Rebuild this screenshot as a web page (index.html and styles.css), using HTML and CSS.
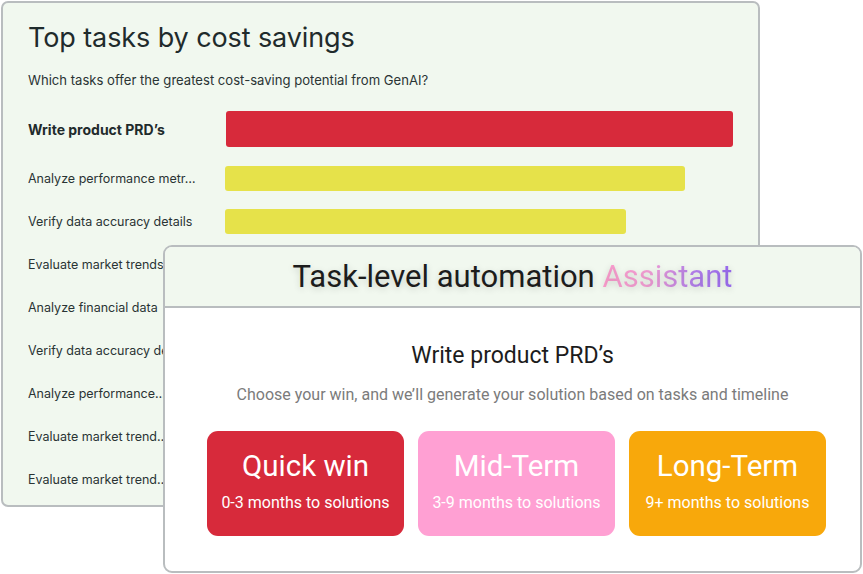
FILE: index.html
```html
<!DOCTYPE html>
<html>
  <head>
    <meta charset="utf-8">
    <title>Task-level automation</title>
    <link rel="stylesheet" href="styles.css">
  </head>
  <body>
    <div class="board">
      <h1 class="board-title">Top tasks by cost savings</h1>
      <p class="board-sub">Which tasks offer the greatest cost-saving potential from GenAI?</p>
      <div class="chart">
        <div class="row row-top">
          <span class="label">Write product PRD’s</span>
          <div class="track"><div class="bar bar-red" style="width: 100%"></div></div>
        </div>
        <div class="row">
          <span class="label">Analyze performance metr…</span>
          <div class="track"><div class="bar" style="width: 90.7%"></div></div>
        </div>
        <div class="row">
          <span class="label">Verify data accuracy details</span>
          <div class="track"><div class="bar" style="width: 79.1%"></div></div>
        </div>
        <div class="row">
          <span class="label">Evaluate market trends</span>
          <div class="track"><div class="bar" style="width: 74%"></div></div>
        </div>
        <div class="row">
          <span class="label">Analyze financial data</span>
          <div class="track"><div class="bar" style="width: 70%"></div></div>
        </div>
        <div class="row">
          <span class="label">Verify data accuracy details</span>
          <div class="track"><div class="bar" style="width: 66%"></div></div>
        </div>
        <div class="row">
          <span class="label">Analyze performance…</span>
          <div class="track"><div class="bar" style="width: 61%"></div></div>
        </div>
        <div class="row">
          <span class="label">Evaluate market trend…</span>
          <div class="track"><div class="bar" style="width: 56%"></div></div>
        </div>
        <div class="row">
          <span class="label">Evaluate market trend…</span>
          <div class="track"><div class="bar" style="width: 50%"></div></div>
        </div>
      </div>
    </div>

    <div class="assistant">
      <div class="assistant-head">
        <h2>Task-level automation <span class="grad">Assistant</span></h2>
      </div>
      <div class="assistant-body">
        <h3 class="task-name">Write product PRD’s</h3>
        <p class="task-hint">Choose your win, and we’ll generate your solution based on tasks and timeline</p>
        <div class="options">
          <button type="button" class="option option-quick">
            <span class="option-title">Quick win</span>
            <span class="option-sub">0-3 months to solutions</span>
          </button>
          <button type="button" class="option option-mid">
            <span class="option-title">Mid-Term</span>
            <span class="option-sub">3-9 months to solutions</span>
          </button>
          <button type="button" class="option option-long">
            <span class="option-title">Long-Term</span>
            <span class="option-sub">9+ months to solutions</span>
          </button>
        </div>
      </div>
    </div>
  </body>
</html>
```

FILE: styles.css
```css
body {
  font-family: Inter, "Noto Sans", sans-serif;
  margin: 0;
  padding: 0;
  background-color: #fff;
  position: relative;
  width: 863px;
  height: 574px;
  overflow: hidden;
}
.board {
  box-sizing: border-box;
  width: 759px;
  height: 506px;
  margin: 1px 0 0 1px;
  padding: 18px 26px 0 25px;
  background-color: #f1f8ef;
  border: 2px solid #b9bdbf;
  border-radius: 7px;
  color: #1f2b2c;
}
.board-title {
  margin: 0;
  font-size: 27px;
  font-weight: 400;
  line-height: 34px;
  letter-spacing: -0.1px;
}
.board-sub {
  margin: 16px 0 0 0;
  font-size: 13.1px;
  line-height: 18px;
  color: #2a3434;
}
.chart {
  display: flex;
  flex-direction: column;
  gap: 18px;
  margin-top: 22px;
}
.row {
  display: grid;
  grid-template-columns: 197px 1fr;
  align-items: center;
  height: 25px;
}
.row-top {
  height: 36px;
  margin-bottom: 1px;
}
.label {
  font-size: 12.5px;
  white-space: nowrap;
  overflow: hidden;
  color: #2a3434;
}
.row-top .label {
  font-size: 14px;
  font-weight: 700;
  color: #1f2b2c;
}
.track {
  height: 100%;
}
.bar {
  height: 100%;
  background-color: #e6e24a;
  border-radius: 3px;
}
.bar-red {
  background-color: #d72a3b;
  margin-left: 1px;
}

.assistant {
  position: absolute;
  left: 163px;
  top: 245px;
  box-sizing: border-box;
  width: 699px;
  height: 328px;
  background-color: #fff;
  border: 2px solid #b9bdbf;
  border-radius: 9px;
  overflow: hidden;
  font-family: Roboto, "Noto Sans", sans-serif;
}
.assistant-head {
  display: flex;
  align-items: center;
  justify-content: center;
  height: 59px;
  background-color: #f1f8ef;
  border-bottom: 2px solid #b9bdbf;
}
.assistant-head h2 {
  margin: 0;
  font-size: 31px;
  font-weight: 400;
  color: #1c1c1c;
  text-shadow: 0 2px 7px rgba(0, 0, 0, 0.16);
}
.grad {
  background: linear-gradient(90deg, #ff9fd0 0%, #f5a0d6 35%, #b782ee 70%, #9a6bf3 100%);
  -webkit-background-clip: text;
  background-clip: text;
  color: transparent;
}
.assistant-body {
  display: flex;
  flex-direction: column;
  align-items: center;
  padding-top: 34px;
}
.task-name {
  margin: 0;
  font-size: 23px;
  font-weight: 400;
  line-height: 28px;
  color: #1c1c1c;
}
.task-hint {
  margin: 15px 0 0 0;
  font-size: 16px;
  line-height: 20px;
  color: #7b7b7b;
}
.options {
  display: flex;
  gap: 14px;
  margin-top: 26px;
  margin-left: 8px;
}
.option {
  display: flex;
  flex-direction: column;
  align-items: center;
  width: 197px;
  height: 105px;
  padding: 17px 0 0 0;
  border: none;
  border-radius: 11px;
  color: #fff;
  font-family: inherit;
  cursor: pointer;
}
.option-title {
  font-size: 29.5px;
  line-height: 36px;
}
.option-sub {
  margin-top: 9px;
  font-size: 16px;
  line-height: 20px;
}
.option-quick {
  background-color: #d72a3b;
}
.option-mid {
  background-color: #ffa0d3;
}
.option-long {
  background-color: #f8a80b;
}
```
